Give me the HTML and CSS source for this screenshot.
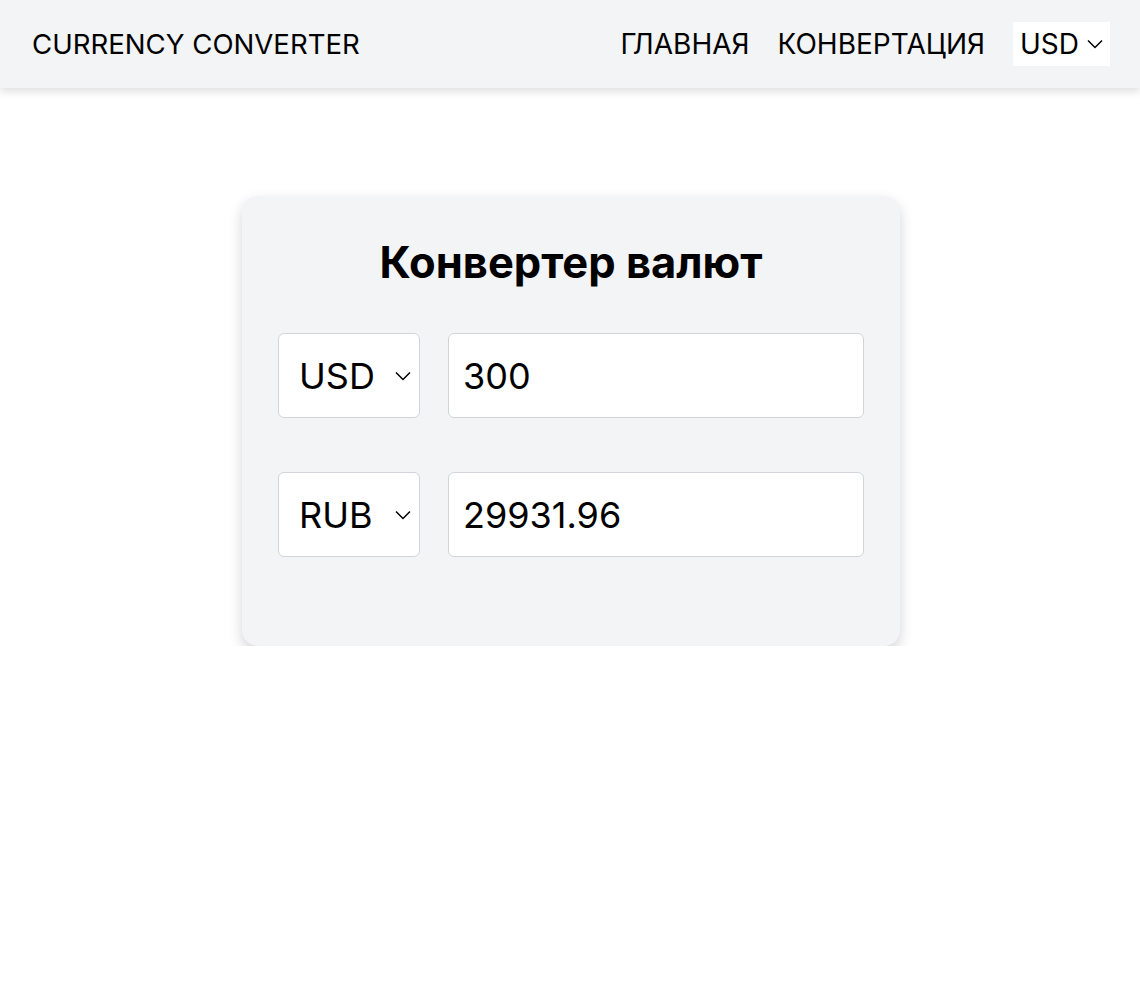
FILE: index.html
```html
<!DOCTYPE html>
<html lang="ru">
<head>
<meta charset="utf-8">
<title>Currency Converter</title>
<link rel="stylesheet" href="styles.css">
</head>
<body>
<header class="header">
  <div class="logo">CURRENCY CONVERTER</div>
  <nav class="nav">
    <a class="nav-link" href="#">ГЛАВНАЯ</a>
    <a class="nav-link" href="#">КОНВЕРТАЦИЯ</a>
    <select class="nav-select">
      <option>USD</option>
      <option>RUB</option>
      <option>EUR</option>
    </select>
  </nav>
</header>
<main class="main">
  <section class="card">
    <h1 class="title">Конвертер валют</h1>
    <div class="row">
      <select class="cur-select">
        <option selected>USD</option>
        <option>RUB</option>
        <option>EUR</option>
      </select>
      <input class="amount" type="text" value="300">
    </div>
    <div class="row">
      <select class="cur-select">
        <option>USD</option>
        <option selected>RUB</option>
        <option>EUR</option>
      </select>
      <input class="amount" type="text" value="29931.96">
    </div>
  </section>
</main>
</body>
</html>
```
FILE: styles.css
```css
* { box-sizing: border-box; }
html, body { margin: 0; padding: 0; }
body {
  font-family: Inter, "Noto Sans", "Liberation Sans", sans-serif;
  color: #000;
  background: #fff;
}
.header {
  height: 88px;
  background: #f3f4f6;
  box-shadow: 0 4px 8px rgba(0,0,0,0.12);
  display: flex;
  align-items: center;
  justify-content: space-between;
  padding: 0 30px 0 32px;
}
.logo {
  font-size: 27.6px;
  font-weight: 400;
}
.nav {
  display: flex;
  align-items: center;
  gap: 28px;
}
.nav-link {
  color: #000;
  text-decoration: none;
  font-size: 28px;
}
.nav-select {
  appearance: none;
  -webkit-appearance: none;
  border: none;
  background: #fff url("data:image/svg+xml,%3Csvg xmlns='http://www.w3.org/2000/svg' width='16' height='10' viewBox='0 0 16 10'%3E%3Cpath d='M1 1.5l7 7 7-7' fill='none' stroke='%23000' stroke-width='1.5'/%3E%3C/svg%3E") no-repeat right 7px center / 16px 10px;
  font-family: inherit;
  font-size: 28px;
  color: #000;
  width: 97px;
  height: 44px;
  padding: 0 0 0 7px;
  border-radius: 0;
  outline: none;
}
.main {
  display: flex;
  justify-content: center;
  padding-top: 108px;
}
.card {
  width: 658px;
  height: 450px;
  background: #f3f4f6;
  border-radius: 16px;
  box-shadow: 0 6px 14px rgba(0,0,0,0.17);
  padding: 36px 36px;
  margin-left: 2px;
}
.title {
  margin: 0 0 41px;
  text-align: center;
  font-size: 43.5px;
  font-weight: 700;
  line-height: 60px;
}
.row {
  display: flex;
  gap: 28px;
  margin-bottom: 54px;
}
.cur-select {
  appearance: none;
  -webkit-appearance: none;
  width: 142px;
  height: 85px;
  border: 1px solid #d1d5db;
  border-radius: 6px;
  background: #fff url("data:image/svg+xml,%3Csvg xmlns='http://www.w3.org/2000/svg' width='16' height='10' viewBox='0 0 16 10'%3E%3Cpath d='M1 1.5l7 7 7-7' fill='none' stroke='%23000' stroke-width='1.5'/%3E%3C/svg%3E") no-repeat right 8px center / 16px 10px;
  font-family: inherit;
  font-size: 36px;
  color: #000;
  padding: 0 0 0 20px;
  outline: none;
}
.amount {
  width: 416px;
  height: 85px;
  border: 1px solid #d1d5db;
  border-radius: 6px;
  background: #fff;
  font-family: inherit;
  font-size: 36px;
  color: #000;
  padding: 0 14px;
  outline: none;
}
```
